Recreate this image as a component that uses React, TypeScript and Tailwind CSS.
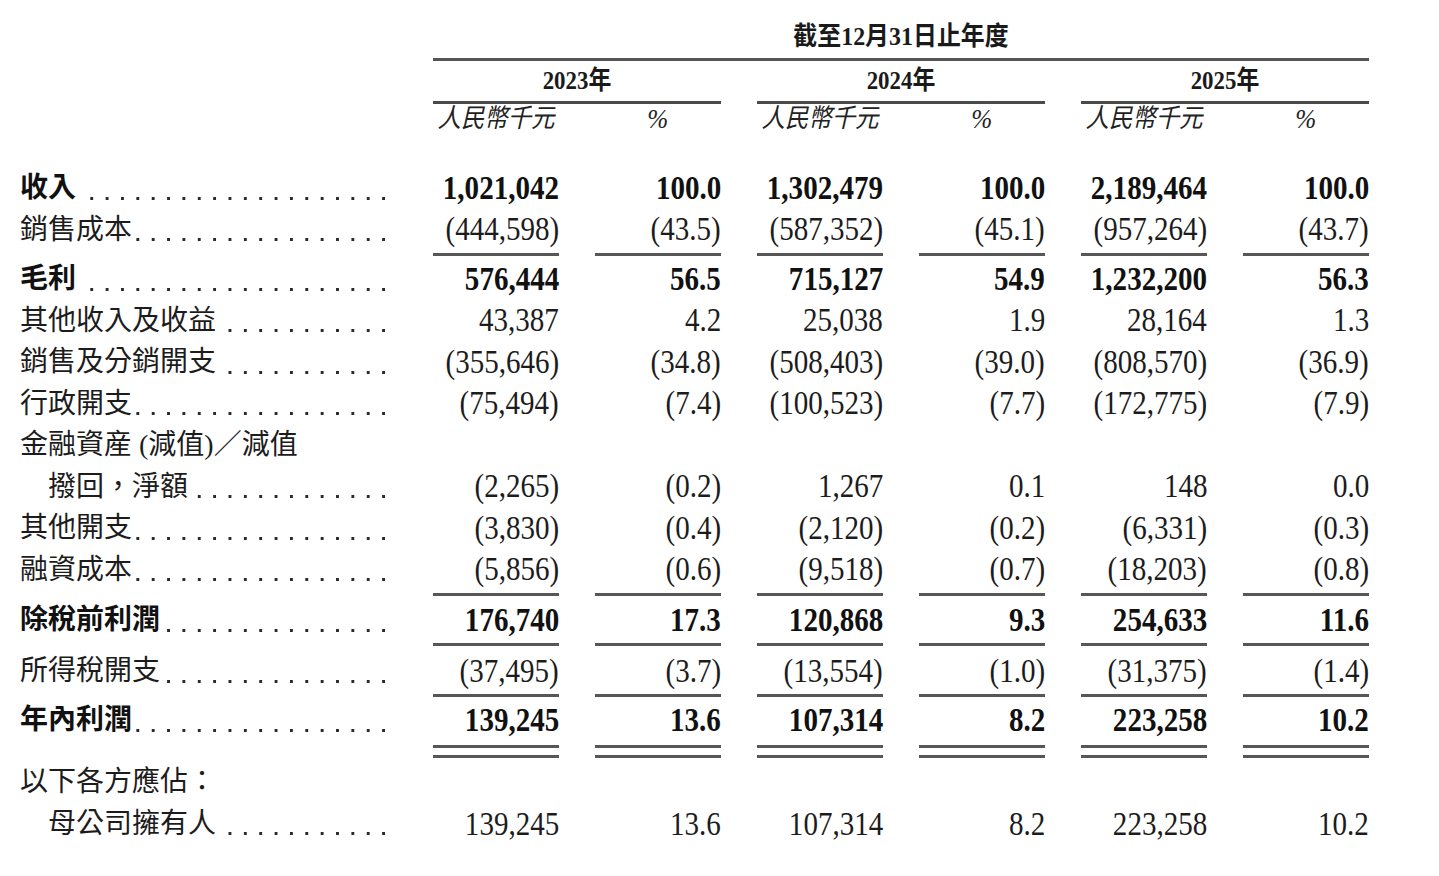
import React from "react";

type RowData = {
  label: string;
  vals?: string[];
  bold?: boolean;
  indent?: boolean;
  dots?: boolean;
  h: string;
};

function Num({ v, bold }: { v: string; bold?: boolean }) {
  return (
    <div className="w-[126px] shrink-0 flex justify-end items-center">
      <span
        className={`inline-block origin-right scale-x-[0.88] text-[33px] leading-none whitespace-nowrap ${
          bold ? "font-bold text-[#111]" : "font-normal text-[#1c1c1c]"
        }`}
      >
        {v}
      </span>
    </div>
  );
}

function Row({ r }: { r: RowData }) {
  const dots =
    r.dots !== false
      ? "bg-[linear-gradient(to_left,#2a2a2a_3px,transparent_3px)] bg-size-[15.36px_3px] bg-position-[right_top_29px] bg-repeat-x"
      : "";
  return (
    <div className={`flex ${r.h}`}>
      <div className={`w-[365px] shrink-0 flex items-center ${dots}`}>
        <span
          className={`bg-white pr-[4px] whitespace-nowrap text-[28px] leading-[36px] ${
            r.indent ? "pl-[28px]" : ""
          } ${r.bold ? "font-bold text-[#111]" : "font-normal text-[#1c1c1c]"}`}
        >
          {r.label}
        </span>
      </div>
      <div className="ml-[48px] flex gap-[36px]">
        {r.vals && r.vals.map((v, i) => <Num key={i} v={v} bold={r.bold} />)}
      </div>
    </div>
  );
}

function Sep({ h, mt }: { h: string; mt: string }) {
  return (
    <div className={`flex ${h}`}>
      <div className="w-[365px] shrink-0" />
      <div className="ml-[48px] flex gap-[36px]">
        {[0, 1, 2, 3, 4, 5].map((i) => (
          <div key={i} className={`w-[126px] h-[3px] bg-[#575757] ${mt}`} />
        ))}
      </div>
    </div>
  );
}

function DoubleSep() {
  return (
    <div className="flex h-[19.5px]">
      <div className="w-[365px] shrink-0" />
      <div className="ml-[48px] flex gap-[36px]">
        {[0, 1, 2, 3, 4, 5].map((i) => (
          <div key={i} className="w-[126px] flex flex-col pt-[4px] gap-[7px]">
            <div className="h-[3px] bg-[#575757]" />
            <div className="h-[3px] bg-[#575757]" />
          </div>
        ))}
      </div>
    </div>
  );
}

const H = "h-[41.5px]";

export default function App() {
  return (
    <div className="min-h-screen bg-white pl-[20px] pt-[16px] font-['Liberation_Serif','Noto_Sans_CJK_TC',serif] text-[#1c1c1c]">
      {/* Header */}
      <div className="flex h-[42px]">
        <div className="w-[365px] shrink-0" />
        <div className="ml-[48px] w-[936px] flex items-center justify-center">
          <span className="inline-block scale-x-[0.92] text-[26px] font-bold leading-none text-[#1a1a1a] whitespace-nowrap">
            截至12月31日止年度
          </span>
        </div>
      </div>
      <div className="flex">
        <div className="w-[365px] shrink-0" />
        <div className="ml-[48px] w-[936px] h-[3px] bg-[#555]" />
      </div>
      <div className="flex h-[40px]">
        <div className="w-[365px] shrink-0" />
        <div className="ml-[48px] flex gap-[36px]">
          {["2023年", "2024年", "2025年"].map((y) => (
            <div key={y} className="w-[288px] flex items-center justify-center">
              <span className="inline-block scale-x-[0.88] text-[26px] font-bold leading-none text-[#1a1a1a] whitespace-nowrap">
                {y}
              </span>
            </div>
          ))}
        </div>
      </div>
      <div className="flex">
        <div className="w-[365px] shrink-0" />
        <div className="ml-[48px] flex gap-[36px]">
          {[0, 1, 2].map((i) => (
            <div key={i} className="w-[288px] h-[3px] bg-[#4a4a4a]" />
          ))}
        </div>
      </div>
      <div className="flex h-[30px]">
        <div className="w-[365px] shrink-0" />
        <div className="ml-[48px] flex gap-[36px]">
          {[0, 1, 2, 3, 4, 5].map((i) => (
            <div key={i} className="w-[126px] flex items-center justify-center">
              <span
                className={`inline-block scale-x-[0.9] italic leading-none text-[#222] whitespace-nowrap ${
                  i % 2 === 0 ? "text-[26px]" : "text-[28px]"
                }`}
              >
                {i % 2 === 0 ? "人民幣千元" : "%"}
              </span>
            </div>
          ))}
        </div>
      </div>
      <div className="h-[33.5px]" />

      {/* Body */}
      <Row r={{ label: "收入", bold: true, h: H, vals: ["1,021,042", "100.0", "1,302,479", "100.0", "2,189,464", "100.0"] }} />
      <Row r={{ label: "銷售成本", h: H, vals: ["(444,598)", "(43.5)", "(587,352)", "(45.1)", "(957,264)", "(43.7)"] }} />
      <Sep h="h-[8px]" mt="mt-[2px]" />
      <Row r={{ label: "毛利", bold: true, h: H, vals: ["576,444", "56.5", "715,127", "54.9", "1,232,200", "56.3"] }} />
      <Row r={{ label: "其他收入及收益", h: H, vals: ["43,387", "4.2", "25,038", "1.9", "28,164", "1.3"] }} />
      <Row r={{ label: "銷售及分銷開支", h: H, vals: ["(355,646)", "(34.8)", "(508,403)", "(39.0)", "(808,570)", "(36.9)"] }} />
      <Row r={{ label: "行政開支", h: H, vals: ["(75,494)", "(7.4)", "(100,523)", "(7.7)", "(172,775)", "(7.9)"] }} />
      <Row r={{ label: "金融資産 (減值)／減值", dots: false, h: H }} />
      <Row r={{ label: "撥回，淨額", indent: true, h: H, vals: ["(2,265)", "(0.2)", "1,267", "0.1", "148", "0.0"] }} />
      <Row r={{ label: "其他開支", h: H, vals: ["(3,830)", "(0.4)", "(2,120)", "(0.2)", "(6,331)", "(0.3)"] }} />
      <Row r={{ label: "融資成本", h: H, vals: ["(5,856)", "(0.6)", "(9,518)", "(0.7)", "(18,203)", "(0.8)"] }} />
      <Sep h="h-[9px]" mt="mt-[2px]" />
      <Row r={{ label: "除稅前利潤", bold: true, h: H, vals: ["176,740", "17.3", "120,868", "9.3", "254,633", "11.6"] }} />
      <Sep h="h-[9.5px]" mt="mt-[2px]" />
      <Row r={{ label: "所得稅開支", h: H, vals: ["(37,495)", "(3.7)", "(13,554)", "(1.0)", "(31,375)", "(1.4)"] }} />
      <Sep h="h-[7.5px]" mt="mt-[2px]" />
      <Row r={{ label: "年內利潤", bold: true, h: H, vals: ["139,245", "13.6", "107,314", "8.2", "223,258", "10.2"] }} />
      <DoubleSep />
      <Row r={{ label: "以下各方應佔：", dots: false, h: "h-[42px]" }} />
      <Row r={{ label: "母公司擁有人", indent: true, h: "h-[43px]", vals: ["139,245", "13.6", "107,314", "8.2", "223,258", "10.2"] }} />
    </div>
  );
}
